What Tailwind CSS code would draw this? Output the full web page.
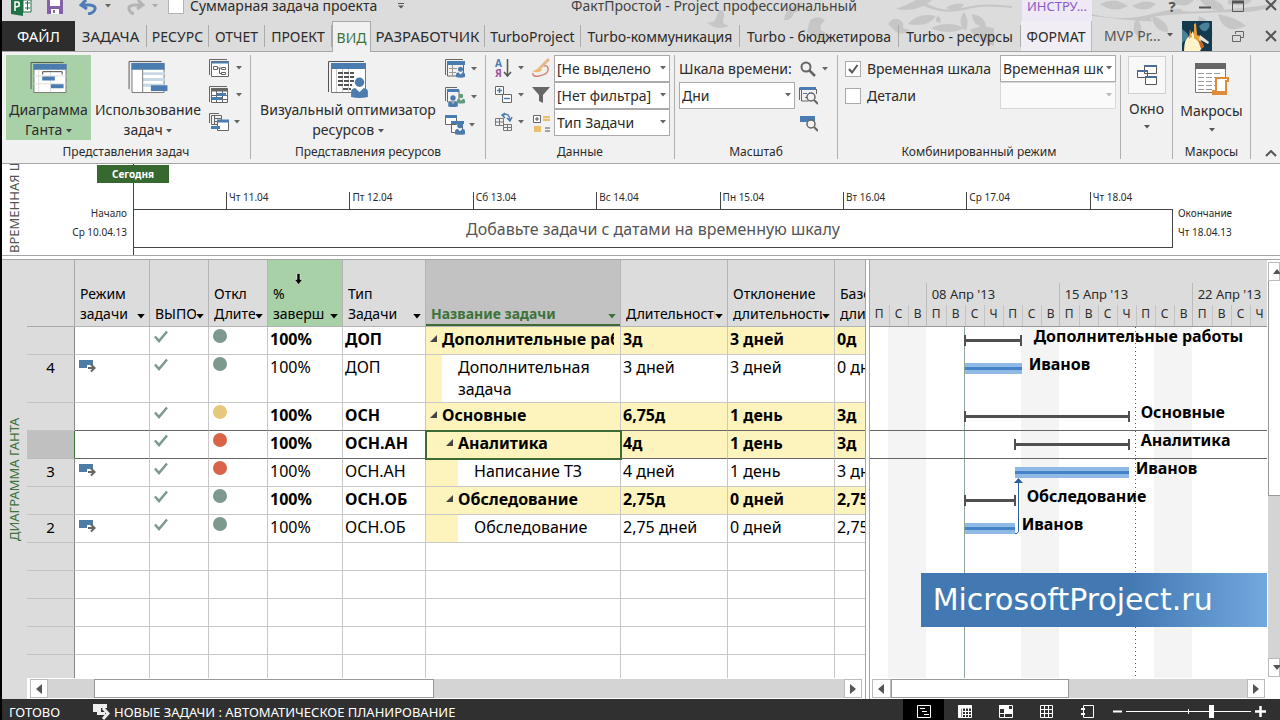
<!DOCTYPE html>
<html lang="ru">
<head>
    <meta charset="UTF-8">
    <meta name="viewport" content="width=device-width, initial-scale=1.0">
    <title>ФактПростой - Project профессиональный</title>
    <script src="https://cdn.jsdelivr.net/npm/@tailwindcss/browser@4"></script>
</head>
<body class="bg-black font-['Noto_Sans','Open_Sans',sans-serif] text-[14px] text-[#2b2b2b]">
<!-- Shared icons -->
<svg class="hidden">
    <symbol id="caret" viewBox="0 0 6 4"><path d="M0 0h6L3 3.5z" fill="currentColor"/></symbol>
    <symbol id="person" viewBox="0 0 16 20"><circle cx="8" cy="5" r="4.5" fill="currentColor"/><path d="M0 19v-5q0-3 4-3.500l4 4 4-4q4 .5 4 3.500v5q-8 2-16 0z" fill="currentColor"/></symbol>
    <symbol id="automode" viewBox="0 0 17 13"><path d="M0 0h14v5H8v3H0z" fill="#4f7ba8"/><path d="M9 8h5M12 4.500 15.500 8 12 11.500" stroke="#666" stroke-width="2" fill="none"/></symbol>
    <symbol id="tick" viewBox="0 0 14 13"><path d="M1 6.500 5 11l8-9.500" stroke="#7d998e" stroke-width="2.500" fill="none"/></symbol>
</svg>

<div class="ml-[2px] flex h-screen flex-col overflow-hidden bg-white">

    <!-- Title bar and tabs -->
    <header class="relative shrink-0 bg-[#dcdcdc]">
        <svg class="absolute right-0 top-0 h-[51px] w-[580px]" viewBox="0 0 580 51" fill="#c6c6c6">
            <path d="M6 22q8 2 10-4l3-8q6 0 5 6l-1 7 6 3q-10 4-17 0zM84 20q2-14 18-18-1 9-8 11-2 8-10 7zM107 32l3-12q10-6 15 1-6 3-4 9l8 5-4 9q-4-6-8-6zM188 24q6-8 12-4 4 2 3 8l7 2q-6 6-14 2z"/>
            <path d="M196 9q13-5 20-9h16q-14 13-36 9zM208 24q10-12 28-8-8 12-28 8zM238 16q4 2 2 7-8-2-2-7zM264 12q6 8 2 19-10-8-2-19zM246 8q8-6 18-4-6 10-18 4zM272 14q14 2 14 14-14-2-14-14zM231 28q16-8 34 0-18 8-34 0zM270 30q10-6 24-2v18q-16-4-24-16z"/>
            <path d="M220 0q22 14 42 8t50-2v2q-30-4-48 2-24 6-48-8z"/>
            <path d="M392 14q30 8 60 0t30-4 60-2 38-10v4q-16 10-38 10t-60 2-30 6-60-4zM400 4q14-8 28 2-14 8-28-2zM432 6q14-8 24-2-10 10-24 2zM436 18q8 8 4 20-10-6-4-20zM452 16q16 4 16 16-14 0-16-16zM470 2q12-6 24-2-8 10-24 2zM500 0h14q10 4 10 10-16 2-24-10zM528 0h24q-6 8-24 4zM484 42q2-12 16-14-2 14-16 14zM499 16q12 4 14 18l-8 10q-10-12-6-28zM518 14q20 4 28 12-22 10-28-12z"/>
        </svg>
        <div class="relative -mt-1 flex h-[25px] text-[14px] leading-[20px]">
            <div class="flex w-[404px] shrink-0 items-center pb-[5px]">
                <svg class="ml-[9px] h-[20px] w-[21px]" viewBox="0 0 21 20"><path d="M0 2 12 0v20L0 18z" fill="#217346"/><path d="M12 4h8v12h-8z" fill="#fff" stroke="#217346"/><path d="M14 7h5M14 12h5M16.500 5v9" stroke="#217346"/><path d="M4 15V6h3q2 1 1 4-2 1-4 1" stroke="#fff" stroke-width="1.500" fill="none"/></svg>
                <svg class="ml-[15px] h-[18px] w-[16px]" viewBox="0 0 16 18"><path d="M0 1h16v16H0z" fill="#8460a8"/><path d="M3 1h10v8H3zM4 12h8v5H4z" fill="#fff"/><path d="M6 13h2v3H6z" fill="#8460a8"/></svg>
                <svg class="ml-[16px] h-[17px] w-[19px]" viewBox="0 0 19 17" fill="none" stroke="#4e7db5" stroke-width="3"><path d="M7 2 2 7l6 4M3 7h8q6 1 5 4-1 4-7 5"/></svg>
                <svg class="ml-[7px] h-[4px] w-[6px] text-[#666]"><use href="#caret"/></svg>
                <svg class="ml-[15px] h-[17px] w-[19px]" viewBox="0 0 19 17" fill="none" stroke="#b4b4b4" stroke-width="3"><path d="m12 2 5 5-6 4M16 7H8q-6 1-5 4 1 4 5 5"/></svg>
                <svg class="ml-[7px] h-[4px] w-[6px] text-[#aaa]"><use href="#caret"/></svg>
                <input id="summary" type="checkbox" class="ml-[10px] h-4 w-4 appearance-none border border-[#b5b5b5] bg-white">
                <label for="summary" class="ml-[6px] whitespace-nowrap">Суммарная задача проекта</label>
                <svg class="ml-auto mr-[2px] h-[6px] w-[6px]" viewBox="0 0 6 6"><path d="M0 .5h6" stroke="#555"/><path d="M0 2.500h6l-3 3z" fill="#555"/></svg>
            </div>
            <h1 class="min-w-0 flex-1 truncate text-center text-[#444]">ФактПростой - Project профессиональный</h1>
            <div class="w-[70px] shrink-0 bg-[#eee9f5] text-center text-[13px] text-[#8a5cc9]">ИНСТРУ...</div>
            <div class="flex w-[188px] shrink-0 items-start justify-end gap-[21px] pr-[3px] text-[#555]">
                <button class="w-3 text-[15px] font-bold" aria-label="Справка">?</button>
                <button aria-label="Свернуть"><svg class="mt-[10px] h-[3px] w-3"><path d="M0 1.500h12" stroke="#555" stroke-width="2"/></svg></button>
                <button aria-label="Развернуть"><svg class="mt-1 h-3 w-3" fill="none" stroke="#555"><path d="M.5 1.500h11v10H.5z"/><path d="M0 2h12" stroke-width="3"/></svg></button>
                <button aria-label="Закрыть"><svg class="mt-[3px] h-3 w-3" stroke="#555" stroke-width="2"><path d="m1 1 10 10M11 1 1 11"/></svg></button>
            </div>
        </div>
        <nav class="relative flex h-[31px] items-stretch whitespace-nowrap border-b border-[#a5a5a5] text-[15px]">
            <button class="w-[73px] shrink-0 bg-[#2d2d2d] text-white">ФАЙЛ</button>
            <button class="my-1 w-[72px] shrink-0 border-r border-[#aaa]">ЗАДАЧА</button>
            <button class="my-1 w-[62px] shrink-0 border-r border-[#aaa] text-[14px]">РЕСУРС</button>
            <button class="my-1 w-[56px] shrink-0 border-r border-[#aaa] text-[14px]">ОТЧЕТ</button>
            <button class="my-1 w-[67px] shrink-0 border-r border-[#aaa] text-[14px]">ПРОЕКТ</button>
            <button class="-mb-px w-[39px] shrink-0 border-x border-t border-[#aaa] bg-[#f1f1f1] text-[14px] text-[#3c7339]">ВИД</button>
            <button class="my-1 w-[114px] shrink-0 border-r border-[#aaa]">РАЗРАБОТЧИК</button>
            <button class="my-1 w-[96px] shrink-0 border-r border-[#aaa] text-[14px]">TurboProject</button>
            <button class="my-1 w-[159px] shrink-0 border-r border-[#aaa] text-[14px]">Turbo-коммуникация</button>
            <button class="my-1 w-[159px] shrink-0 border-r border-[#aaa] text-[14px]">Turbo - бюджетирова</button>
            <button class="my-1 w-[122px] shrink-0 border-r border-[#aaa] text-[14px]">Turbo - ресурсы</button>
            <button class="ml-auto w-[71px] shrink-0 border-r border-[#bbb] bg-[#f0edf4] text-[14px]">ФОРМАТ</button>
            <div class="flex w-[188px] shrink-0 items-center text-[14px] text-[#555]">
                <button class="ml-[12px] flex items-center gap-[7px] pb-[2px]">MVP Pr...<svg class="h-[4px] w-[6px]"><use href="#caret"/></svg></button>
                <svg class="ml-auto h-[30px] w-[30px]" viewBox="0 0 30 30"><path d="M0 0h30v30H0z" fill="#143a50"/><path d="M17 5q5-5 10-3 2 4-3 8-5 1-7-5zM0 8q5 3 7 8l-7 6z" fill="#4a8098"/><path d="M2 30q0-13 6-15l3-5 2 8 4-2q3 6 4 9l-3 5z" fill="#fff3c8"/><path d="m12 3 2-1 1 12 3 1-1 6-5-4zM8 8l2 8-3 2z" fill="#e9a23a"/><path d="m18 14 9 7-1 2-9-5z" fill="#e8e4da"/><path d="M16 19q6 2 6 7l-3 2z" fill="#c8651f"/></svg>
                <button class="ml-[20px]" aria-label="Восстановить окно"><svg class="h-[11px] w-3" fill="none" stroke="#666"><path d="M3.500 3V.5h8v6H9M.5 4.500h8v6h-8z"/></svg></button>
                <button class="ml-[21px] mr-[3px]" aria-label="Закрыть окно"><svg class="h-3 w-3" stroke="#555" stroke-width="2"><path d="m1 1 10 10M11 1 1 11"/></svg></button>
            </div>
        </nav>
    </header>

    <!-- Ribbon -->
    <section class="flex h-[112px] shrink-0 border-b border-[#a5a5a5] bg-[#f1f1f1] pt-[3px] pb-1 text-[14px] leading-[20px]">
        <div class="flex w-[249px] shrink-0 flex-col border-r border-[#b0b0b0]">
            <div class="flex h-[85px]">
                <button class="ml-1 flex w-[85px] flex-col items-center bg-[#a9d1a7] pt-[6px]">
                    <svg class="h-[34px] w-[38px]" viewBox="0 0 38 34"><path d="M.5 29V1.500H34" stroke="#555" fill="none"/><path d="M3.500 3.500h33v29h-33z" fill="#fff" stroke="#777"/><path d="M3 3h34v6H3z" fill="#4b7cb0"/><path d="M8.500 9v23M3 15.500h34M3 23.500h34M20.500 9v23" stroke="#ddd"/><path d="M12.500 14v-3h20v3" stroke="#444" fill="none"/><path d="M12 16h13v4H12zM21 24h13v4H21z" fill="#4b7cb0"/></svg>
                    <span class="mt-[6px] text-center">Диаграмма<br>Ганта <svg class="inline h-[4px] w-[6px] align-middle text-[#444]"><use href="#caret"/></svg></span>
                </button>
                <button class="flex w-[114px] flex-col items-center pt-[5px]">
                    <svg class="h-[35px] w-[40px]" viewBox="0 0 40 35"><path d="M.5 30V1.500H34" stroke="#555" fill="none"/><path d="M3.500 3.500h33v30h-33z" fill="#fff" stroke="#777"/><path d="M3 3h34v7H3z" fill="#4b7cb0"/><path d="M15 14h22M15 20h22M15 26h22" stroke="#c8d8e6" stroke-width="3"/><path d="M14.500 9v24" stroke="#777"/><path d="M23 26h17v6H23z" fill="#4b7cb0"/></svg>
                    <span class="mt-[6px] text-center">Использование<br>задач <svg class="inline h-[4px] w-[6px] align-middle text-[#555]"><use href="#caret"/></svg></span>
                </button>
                <div class="ml-[4px] flex flex-col gap-[9px] pt-[4px] text-[#666]">
                    <button class="flex items-center gap-[6px]"><svg class="h-[18px] w-[21px]" viewBox="0 0 21 18" fill="none" stroke="#666"><path d="M.5 16V.5H18"/><path d="M2.500 2.500h17v15h-17z" fill="#fff"/><path d="M2 3.500h18" stroke="#4b7cb0" stroke-width="2"/><path d="M4.500 7.500h4v3h-4zM12.500 8.500h4v2h-4zM12.500 13.500h4v2h-4zM8 9h4M10.500 9v5.500h2"/></svg><svg class="h-[4px] w-[6px]"><use href="#caret"/></svg></button>
                    <button class="flex items-center gap-[6px]"><svg class="h-[18px] w-[21px]" viewBox="0 0 21 18" fill="none" stroke="#666"><path d="M.5 16V.5H18"/><path d="M2.500 2.500h16v14h-16z" fill="#fff"/><path d="M2 4h17" stroke-width="3"/><path d="M7.500 5v12M13.500 5v12M2 9.500h17M2 13.500h17"/><path d="M8 8.500h9M3 12.500h10" stroke="#4b7cb0" stroke-width="3"/></svg><svg class="h-[4px] w-[6px]"><use href="#caret"/></svg></button>
                    <button class="flex items-center gap-[4px]"><svg class="h-[18px] w-[21px]" viewBox="0 0 21 18" fill="none" stroke="#666"><path d="M.5 10V.5H10M2.500 2.500h10v9h-10z"/><path d="M5.500 3v8M6 5.500h6M6 8.500h6"/><path d="M8.500 8.500h11v9h-11z" fill="#fff"/><path d="M8 8h12M2 14.500h9" stroke="#4b7cb0" stroke-width="3"/></svg><svg class="h-[4px] w-[6px]"><use href="#caret"/></svg></button>
                </div>
            </div>
            <p class="mt-auto text-center text-[12px] leading-[14px]">Представления задач</p>
        </div>

        <div class="flex w-[235px] shrink-0 flex-col border-r border-[#b0b0b0]">
            <div class="flex h-[85px]">
                <button class="ml-1 flex w-[186px] flex-col items-center pt-[5px]">
                    <svg class="h-[38px] w-[40px]" viewBox="0 0 40 38"><path d="M.5 32V1.500H36" stroke="#555" fill="none"/><path d="M3.500 3.500h34v29h-34z" fill="#fff" stroke="#777"/><path d="M3 3h35v6H3z" fill="#4b7cb0"/><path d="M8.500 9v23M14.500 9v23M20.500 9v23" stroke="#ccc"/><path d="M10 13h16M10 17h16M10 21h16M10 25h14M15 29h8" stroke="#555" stroke-width="2" stroke-dasharray="5 1"/><g color="#4b7cb0"><use href="#person" x="23" y="17" width="17" height="21"/></g></svg>
                    <span class="mt-[2px] whitespace-nowrap text-center">Визуальный оптимизатор<br>ресурсов <svg class="inline h-[4px] w-[6px] align-middle text-[#555]"><use href="#caret"/></svg></span>
                </button>
                <div class="ml-[4px] flex flex-col gap-[8px] pt-[4px] text-[#666]">
                    <button class="flex items-center gap-[6px]"><svg class="h-5 w-5" viewBox="0 0 20 20"><path d="M.5 16V.5H18M2.500 3v14h16V3" fill="none" stroke="#666"/><path d="M2 2h18v4H2z" fill="#4b7cb0"/><path d="M7.500 6v11M4 9.500h8M4 13.500h7" stroke="#999"/><g color="#4b7cb0"><use href="#person" x="11" y="7" width="9" height="12"/></g></svg><svg class="h-[4px] w-[6px]"><use href="#caret"/></svg></button>
                    <button class="flex items-center gap-[6px]"><svg class="h-5 w-5" viewBox="0 0 20 20"><path d="M.5 14V.5H12M2.500 3v12H14V3" fill="none" stroke="#666"/><path d="M2 2h12v3H2z" fill="#4b7cb0"/><g color="#4b7cb0"><use href="#person" x="3" y="8" width="10" height="12"/></g><g color="#5f9c7b"><use href="#person" x="12" y="6" width="8" height="11"/></g></svg><svg class="h-[4px] w-[6px]"><use href="#caret"/></svg></button>
                    <button class="flex items-center gap-[4px]"><svg class="h-5 w-5" viewBox="0 0 20 20"><path d="M.5.5h11v9H.5zM6.500 8.500h11v9h-11z" fill="#fff" stroke="#666"/><path d="M0 0h12v3H0zM6 6h13v3H6z" fill="#4b7cb0"/><g color="#4b7cb0"><use href="#person" x="10" y="7" width="10" height="13"/></g></svg><svg class="h-[4px] w-[6px]"><use href="#caret"/></svg></button>
                </div>
            </div>
            <p class="mt-auto text-center text-[12px] leading-[14px]">Представления ресурсов</p>
        </div>

        <div class="flex w-[189px] shrink-0 flex-col border-r border-[#b0b0b0]">
            <div class="flex h-[85px]">
                <div class="ml-[8px] flex w-[30px] flex-col gap-[7px] pt-[3px] text-[#666]">
                    <button class="flex items-center gap-[5px]"><svg class="h-5 w-[19px]" viewBox="0 0 19 20"><text x="1" y="9" font-size="10" font-weight="bold" fill="#4b7cb0">А</text><text x="1" y="19" font-size="10" font-weight="bold" fill="#9a4fa0">Я</text><path d="M13.500 1v16M10 14l3.500 4 3.500-4" stroke="#555" fill="none" stroke-width="1.500"/></svg><svg class="h-[4px] w-[6px]"><use href="#caret"/></svg></button>
                    <button class="flex items-center gap-[5px]"><svg class="h-5 w-[19px]" viewBox="0 0 19 20" fill="none"><path d="M1.500 1.500h8v8h-8zM8.500 9.500h9v8h-9z" fill="#fff" stroke="#666"/><path d="M3 5.500h5M5.500 3v5M10 13.500h6" stroke="#4b7cb0" stroke-width="1.500"/></svg><svg class="h-[4px] w-[6px]"><use href="#caret"/></svg></button>
                    <button class="flex items-center gap-[5px]"><svg class="h-5 w-[19px]" viewBox="0 0 19 20" fill="none" stroke="#777"><path d="M1.500 6.500h8v7h-8zM1 10h8M5.500 7v6M9.500 12.500h8v6h-8zM9 15.500h8M13.500 12v6"/><path d="M9 3q6-3 7 5M13 6l3 3 2-4M11 1 8 3l3 3" stroke="#4b7cb0" stroke-width="1.500"/></svg><svg class="h-[4px] w-[6px]"><use href="#caret"/></svg></button>
                </div>
                <div class="ml-[6px] flex w-[22px] flex-col items-center gap-[7px] pt-[3px]">
                    <svg class="h-5 w-5" viewBox="0 0 20 20" fill="none"><path d="M2 15q-1 4 6 3 10-2 9-7 0-4-4-3" stroke="#d98076" stroke-width="1.500"/><path d="M1 13q5-1 7-4l3 3q-3 4-10 1z" fill="#edb96c"/><path d="M9 10 18 1" stroke="#e5b987" stroke-width="3"/></svg>
                    <svg class="h-5 w-5" viewBox="0 0 20 20"><path d="M1 2h18l-7 8v8l-4-2v-6z" fill="#666"/></svg>
                    <svg class="h-5 w-5" viewBox="0 0 20 20"><path d="M2.500 3.500h7v7h-7z" fill="#fff" stroke="#666"/><path d="M4 7h4M6 5v4M14 16h5M14 19h5" stroke="#555"/><path d="M12 4h7v5h-7zM3 14h7v6H3z" fill="#eabf6d"/><path d="M12 6.500h7" stroke="#f6e5bf"/></svg>
                </div>
                <div class="ml-[2px] w-[116px]">
                    <div class="relative"><select aria-label="Выделение" class="block h-[27px] w-full appearance-none overflow-hidden border border-[#ababab] bg-white pl-[2px] pr-3"><option>[Не выделено</option></select><svg class="pointer-events-none absolute right-1 top-[11px] h-[4px] w-[6px] text-[#666]"><use href="#caret"/></svg></div>
                    <div class="relative"><select aria-label="Фильтр" class="block h-[27px] w-full appearance-none overflow-hidden border border-[#ababab] bg-white pl-[2px] pr-3"><option>[Нет фильтра]</option></select><svg class="pointer-events-none absolute right-1 top-[11px] h-[4px] w-[6px] text-[#666]"><use href="#caret"/></svg></div>
                    <div class="relative"><select aria-label="Группировка" class="block h-[27px] w-full appearance-none overflow-hidden border border-[#ababab] bg-white pl-[2px] pr-3"><option>Тип Задачи</option></select><svg class="pointer-events-none absolute right-1 top-[11px] h-[4px] w-[6px] text-[#666]"><use href="#caret"/></svg></div>
                </div>
            </div>
            <p class="mt-auto text-center text-[12px] leading-[14px]">Данные</p>
        </div>

        <div class="flex w-[163px] shrink-0 flex-col border-r border-[#b0b0b0]">
            <div class="flex h-[27px] items-center pl-1">
                <label for="scale" class="w-[121px] whitespace-nowrap">Шкала времени:</label>
                <button class="flex items-center gap-[6px] text-[#666]" aria-label="Масштаб"><svg class="h-4 w-4" viewBox="0 0 16 16" fill="none" stroke="#666" stroke-width="2"><circle cx="6" cy="6" r="4.500"/><path d="m9 9 6 6" stroke-width="2.500"/></svg><svg class="h-[4px] w-[6px]"><use href="#caret"/></svg></button>
            </div>
            <div class="flex h-[27px] items-center pl-1">
                <div class="relative w-[116px]"><select id="scale" class="block h-[27px] w-full appearance-none border border-[#ababab] bg-white pl-[2px]"><option>Дни</option></select><svg class="pointer-events-none absolute right-1 top-[11px] h-[4px] w-[6px] text-[#666]"><use href="#caret"/></svg></div>
                <button class="ml-1" aria-label="Весь проект"><svg class="h-5 w-[19px]" viewBox="0 0 19 20" fill="none" stroke="#666"><path d="M.5 14V1.500M2.500 3v12h7M17.500 3v5"/><path d="M1 2.500h16" stroke="#4b7cb0" stroke-width="3"/><path d="M4 7.500h4M6 11.500h3" stroke="#4b7cb0"/><circle cx="12" cy="11" r="4" stroke-width="1.500" fill="#f1f1f1"/><path d="m15 14 4 4" stroke-width="2"/></svg></button>
            </div>
            <div class="flex h-[27px] items-center pl-1">
                <button class="ml-[120px]" aria-label="Выбранные задачи"><svg class="h-5 w-[19px]" viewBox="0 0 19 20" fill="none"><path d="M1 3h15v6H1z" fill="#4b7cb0"/><circle cx="12" cy="11" r="4" stroke="#666" stroke-width="1.500" fill="#f1f1f1"/><path d="m15 14 4 4" stroke="#666" stroke-width="2"/></svg></button>
            </div>
            <p class="mt-auto text-center text-[12px] leading-[14px]">Масштаб</p>
        </div>

        <div class="flex w-[283px] shrink-0 flex-col border-r border-[#b0b0b0]">
            <div class="flex h-[27px] items-center pl-[7px]">
                <input id="tl" type="checkbox" checked class="h-4 w-4 appearance-none border border-[#ababab] bg-white">
                <svg class="pointer-events-none -ml-4 h-4 w-4" viewBox="0 0 16 16"><path d="m4 8 3 3.500L12.500 4" stroke="#555" stroke-width="2" fill="none"/></svg>
                <label for="tl" class="ml-[6px] w-[133px] whitespace-nowrap">Временная шкала</label>
                <div class="relative w-[116px]"><select aria-label="Представление шкалы" class="block h-[27px] w-full appearance-none overflow-hidden border border-[#ababab] bg-white pl-[2px] pr-3"><option>Временная шкала</option></select><svg class="pointer-events-none absolute right-1 top-[11px] h-[4px] w-[6px] text-[#666]"><use href="#caret"/></svg></div>
            </div>
            <div class="flex h-[27px] items-center pl-[7px]">
                <input id="details" type="checkbox" class="h-4 w-4 appearance-none border border-[#ababab] bg-white">
                <label for="details" class="ml-[6px] w-[133px]">Детали</label>
                <div class="relative w-[116px]"><select aria-label="Представление деталей" disabled class="block h-[27px] w-full appearance-none border border-[#d8d8d8] bg-[#fafafa]"></select><svg class="pointer-events-none absolute right-1 top-[11px] h-[4px] w-[6px] text-[#bbb]"><use href="#caret"/></svg></div>
            </div>
            <p class="mt-auto text-center text-[12px] leading-[14px]">Комбинированный режим</p>
        </div>

        <div class="flex w-[52px] shrink-0 justify-center border-r border-[#b0b0b0]">
            <button class="flex flex-col items-center self-start pt-px">
                <span class="flex h-[38px] w-[38px] items-center justify-center border border-[#d0d0d0] bg-[#f8f8f8]"><svg class="h-5 w-5" viewBox="0 0 20 20" fill="#fff" stroke="#555"><path d="M7.500.5h12v8h-12zM.5 5.500h10v7H.5z"/><path d="M8.500 11.500h11v8h-11z"/><path d="M7 1h13M0 6h11M8 12h12" stroke="#4b6f96" stroke-width="2"/></svg></span>
                <span class="mt-[5px]">Окно</span>
                <svg class="mt-[6px] h-[4px] w-[6px] text-[#555]"><use href="#caret"/></svg>
            </button>
        </div>

        <div class="flex w-[78px] shrink-0 flex-col items-center border-r border-[#b0b0b0]">
            <button class="flex flex-col items-center pt-[7px]">
                <svg class="h-[35px] w-9" viewBox="0 0 36 35"><path d="M1.500 1.500h30v29h-30z" fill="#fff" stroke="#777"/><path d="M1 1h31v6H1z" fill="#666"/><path d="M4 11.500h24M4 15.500h24M4 19.500h20M4 23.500h18M4 27.500h16" stroke="#999" stroke-dasharray="6 2"/><path d="M22 16h12v3h-2v13H19v-3h3z" fill="#fff" stroke="#e08a3c" stroke-width="2"/><path d="M18 29h13v4H18z" fill="#e08a3c"/></svg>
                <span class="mt-[4px]">Макросы</span>
                <svg class="mt-[7px] h-[4px] w-[6px] text-[#555]"><use href="#caret"/></svg>
            </button>
            <p class="mt-auto text-center text-[12px] leading-[14px]">Макросы</p>
        </div>
        <button class="ml-auto mr-[3px] self-end pb-[2px]" aria-label="Свернуть ленту"><svg class="h-[7px] w-3" fill="none" stroke="#555" stroke-width="2"><path d="m1 6 5-5 5 5"/></svg></button>
    </section>

    <!-- Timeline -->
    <section class="flex h-[92px] shrink-0 overflow-hidden border-b border-[#a5a5a5] text-[10px]">
        <div class="flex w-[25px] shrink-0 rotate-180 items-center whitespace-nowrap pt-[2px] text-[13px] leading-[25px] text-[#555] [writing-mode:vertical-rl]">ВРЕМЕННАЯ ШКАЛА</div>
        <div class="w-[106px] shrink-0 pr-[6px] pt-[40px] text-right leading-[19px]">Начало<br>Ср 10.04.13</div>
        <div class="relative flex flex-1 flex-col border-l border-[#444]">
            <div class="absolute -left-[37px] top-[1px] h-[18px] w-[72px] bg-[#37682f] text-center font-bold leading-[18px] text-white">Сегодня</div>
            <div class="mt-[28px] flex h-[17px] leading-none">
                <div class="flex-[94]"></div>
                <div class="flex-[123] border-l border-[#444] pl-[2px]">Чт 11.04</div>
                <div class="flex-[123] border-l border-[#444] pl-[2px]">Пт 12.04</div>
                <div class="flex-[123] border-l border-[#444] pl-[2px]">Сб 13.04</div>
                <div class="flex-[123] border-l border-[#444] pl-[2px]">Вс 14.04</div>
                <div class="flex-[123] border-l border-[#444] pl-[2px]">Пн 15.04</div>
                <div class="flex-[123] border-l border-[#444] pl-[2px]">Вт 16.04</div>
                <div class="flex-[123] border-l border-[#444] pl-[2px]">Ср 17.04</div>
                <div class="flex-[82] border-l border-[#444] pl-[2px]">Чт 18.04</div>
            </div>
            <div class="-ml-px h-[39px] border border-[#444] text-center text-[16px] leading-[38px] text-[#555]">Добавьте задачи с датами на временную шкалу</div>
        </div>
        <div class="w-[107px] shrink-0 pl-[5px] pt-[40px] leading-[19px]">Окончание<br>Чт 18.04.13</div>
    </section>

    <!-- Gantt view -->
    <main class="mt-[3px] flex min-h-0 flex-1 border-t border-[#a5a5a5]">
        <div class="flex w-[25px] shrink-0 rotate-180 items-center justify-center whitespace-nowrap bg-[#dcdcdc] text-[13px] leading-[25px] text-[#3c7339] [writing-mode:vertical-rl]">ДИАГРАММА ГАНТА</div>

        <section class="flex min-w-0 flex-[839] flex-col border-r border-[#a5a5a5]">
            <div class="min-h-0 flex-1 overflow-hidden">
                <table class="w-[880px] table-fixed border-separate border-spacing-0 text-[16px] leading-[22px] text-black">
                    <colgroup>
                        <col class="w-[48px]"><col class="w-[75px]"><col class="w-[59px]"><col class="w-[59px]"><col class="w-[75px]"><col class="w-[83px]"><col class="w-[195px]"><col class="w-[107px]"><col class="w-[107px]"><col>
                    </colgroup>
                    <thead id="head"></thead>
                    <tbody id="rows"></tbody>
                </table>
            </div>
            <div class="flex h-[21px] shrink-0 bg-white px-[3px] py-px">
                <button class="flex w-[18px] items-center justify-center border border-[#bbb]" aria-label="Влево"><svg class="h-[10px] w-[6px]"><path d="M6 0v10L0 5z" fill="#555"/></svg></button>
                <div class="flex flex-1 bg-[#d4d4d4] pl-[46px]"><div class="w-[340px] border border-[#999] bg-white"></div></div>
                <button class="flex w-[18px] items-center justify-center border border-[#bbb]" aria-label="Вправо"><svg class="h-[10px] w-[6px]"><path d="M0 0v10l6-5z" fill="#555"/></svg></button>
            </div>
        </section>

        <section class="ml-[3px] flex min-w-0 flex-[398] flex-col border-l border-[#a5a5a5]">
            <div id="weeks" class="flex h-[67px] shrink-0 overflow-hidden border-b border-[#999] bg-[#dcdcdc] pt-[23px] text-[13px]"></div>
            <div class="relative min-h-0 flex-1 overflow-hidden text-[16px] font-bold text-black">
                <div class="absolute left-[18px] top-0 h-full w-[38px] bg-[#f4f4f4]"></div>
                <div class="absolute left-[151px] top-0 h-full w-[38px] bg-[#f4f4f4]"></div>
                <div class="absolute left-[284px] top-0 h-full w-[38px] bg-[#f4f4f4]"></div>
                <div class="absolute left-[94px] top-0 h-full w-px bg-[#8fa598]"></div>
                <div class="absolute left-0 top-[103px] h-[29px] w-full border-y border-[#666]"></div>
                <div id="bars"></div>
                <svg class="absolute left-[144px] top-[150px] h-[60px] w-[10px]"><path d="M1 56.500h2l1.500-2V4" stroke="#2c5f9e" fill="none"/><path d="M0 6h9L4.500 1z" fill="#2c5f9e"/></svg>
                <svg class="absolute left-[265px] top-0 h-full w-px"><path d="M.5 0v1000" stroke="#555" stroke-dasharray="1 3"/></svg>
                <a href="#" class="absolute left-[51px] right-0 top-[246px] h-[54px] bg-linear-to-r from-[#4279b3] from-60% to-[#72a8de] pl-3 font-['DejaVu_Sans',sans-serif] text-[30px] font-normal leading-[54px] text-white">MicrosoftProject.ru</a>
            </div>
            <div class="flex h-[21px] shrink-0 bg-white px-[2px] py-px">
                <button class="flex w-[19px] items-center justify-center border border-[#bbb]" aria-label="Влево"><svg class="h-[10px] w-[6px]"><path d="M6 0v10L0 5z" fill="#555"/></svg></button>
                <div class="flex flex-1 bg-[#d4d4d4]"><div class="w-[178px] border border-[#999] bg-white"></div></div>
                <button class="flex w-[18px] items-center justify-center border border-[#bbb]" aria-label="Вправо"><svg class="h-[10px] w-[6px]"><path d="M0 0v10l6-5z" fill="#555"/></svg></button>
            </div>
        </section>

        <div class="ml-px flex w-[12px] shrink-0 flex-col overflow-hidden pb-[22px] pt-[2px]">
            <button class="flex h-[19px] shrink-0 items-center border border-[#bbb] pl-1" aria-label="Вверх"><svg class="h-[5px] w-[7px] shrink-0"><path d="M0 5 4 0l4 5z" fill="#555"/></svg></button>
            <div class="flex-1 bg-[#d4d4d4]"><div class="h-[57%] border-b border-l border-[#999] bg-white"></div></div>
            <button class="flex h-[19px] shrink-0 items-center border border-[#bbb] pl-1" aria-label="Вниз"><svg class="h-[5px] w-[7px] shrink-0"><path d="M0 0h8L4 5z" fill="#555"/></svg></button>
        </div>
    </main>

    <!-- Status bar -->
    <footer class="flex h-[21px] shrink-0 items-stretch bg-[#303030] text-[13px] leading-[26px] text-white">
        <span class="w-[90px] pl-[7px]">ГОТОВО</span>
        <button class="flex items-start gap-[4px] whitespace-nowrap"><svg class="mt-[5px] h-4 w-[18px]" viewBox="0 0 18 16"><path d="M1 0h14v4H9v4H1z" fill="#eee"/><path d="M5 9.500h8M11 4l5 5.500-5 5.500" stroke="#eee" stroke-width="3" fill="none"/></svg>НОВЫЕ ЗАДАЧИ : АВТОМАТИЧЕСКОЕ ПЛАНИРОВАНИЕ</button>
        <div class="ml-auto flex items-stretch">
            <button class="flex w-[41px] items-center justify-center bg-black pt-[4px]" aria-label="Диаграмма Ганта"><svg class="h-[13px] w-[14px]" fill="none" stroke="#fff"><path d="M.5.5h13v12H.5zM3 3.500h5M5 6.500h5M7 9.500h5"/></svg></button>
            <button class="flex w-[41px] items-center justify-center pt-[4px]" aria-label="Использование задач"><svg class="h-[13px] w-[14px]" fill="none" stroke="#fff"><path d="M.5.5h13v12H.5zM4.500 3v10M7.500 3v10M10.500 3v10M4 6.500h10M4 9.500h10"/><path d="M0 2h14M2 0v13" stroke-width="3"/></svg></button>
            <button class="flex w-[41px] items-center justify-center pt-[4px]" aria-label="Визуальный оптимизатор"><svg class="h-[13px] w-[14px]" fill="none" stroke="#fff"><path d="M.5.5h13v12H.5zM0 8.500h14M5.500 8v5"/><path d="M0 2h10M5 6h9" stroke-width="4"/></svg></button>
            <button class="flex w-[41px] items-center justify-center pt-[4px]" aria-label="Лист ресурсов"><svg class="h-[13px] w-[13px]" fill="none" stroke="#fff"><path d="M.5.5h12v12H.5zM4.500 0v13M8.500 0v13M0 4.500h13M0 8.500h13"/></svg></button>
            <button class="flex w-[41px] items-center justify-center pt-[4px]" aria-label="Отчет"><svg class="h-[13px] w-[13px]" fill="none" stroke="#fff"><path d="M2.500.5h10v12h-10z"/><path d="M0 4h4M0 9h4" stroke-width="2"/></svg></button>
            <div class="ml-[5px] mr-[14px] flex items-center pt-[4px]">
                <button aria-label="Уменьшить"><svg class="h-[3px] w-[9px]"><path d="M0 1.500h9" stroke="#fff" stroke-width="2"/></svg></button>
                <input type="range" aria-label="Масштаб" min="0" max="100" value="69" class="mx-[4px] h-[13px] w-[125px] appearance-none bg-[linear-gradient(#fff,#fff),linear-gradient(#fff,#fff)] bg-[length:100%_1px,1px_5px] bg-center bg-no-repeat [&::-webkit-slider-thumb]:h-[13px] [&::-webkit-slider-thumb]:w-[5px] [&::-webkit-slider-thumb]:appearance-none [&::-webkit-slider-thumb]:bg-white">
                <button aria-label="Увеличить"><svg class="h-[11px] w-[11px]"><path d="M0 5.500h11M5.500 0v11" stroke="#fff" stroke-width="2.500"/></svg></button>
            </div>
        </div>
    </footer>
</div>

<script>
    const dotColors = { g: 'fill-[#7d998e]', y: 'fill-[#e6c77b]', r: 'fill-[#d9644a]' };

    // Column headers
    const columns = [
        ['Режим<br>задачи'], ['ВЫПОЛ'], ['Откл<br>Длител'],
        ['%<br>заверш', 'relative bg-[#a9d1a7] font-normal'], ['Тип<br>Задачи'],
        ['Название задачи', 'bg-[#c2c2c2] font-bold text-[#3c7339] shadow-[inset_0_-2px_#3c6b35]'],
        ['Длительность'], ['Отклонение<br>длительности'], ['Базовая<br>длительность']
    ];
    // Column selection pointer
    const pointer = '<svg class="absolute left-[26px] top-[13px] h-[12px] w-[9px]"><path d="M3 .5h3v6h2.500l-4 5-4-5H3z" fill="#000" stroke="#fff" stroke-width=".5"/></svg>';
    let html = '<tr class="h-[67px] text-left text-[14px] leading-[20px]"><th class="border-b border-r border-[#aaa] bg-[#dcdcdc]"></th>';
    columns.forEach(([title, extra], i) => {
        html += `<th class="border-b border-r border-[#b4b4b4] ${extra || 'bg-[#dcdcdc] font-normal'} p-0 align-bottom">
            ${i === 3 ? pointer : ''}
            <div class="flex items-end pb-[2px] pl-[5px] pr-[4px]">
                <span class="min-w-0 flex-1 overflow-hidden whitespace-nowrap">${title}</span>
                <svg class="mb-[5px] h-[5px] w-[8px] shrink-0"><use href="#caret"/></svg>
            </div></th>`;
    });
    document.getElementById('head').innerHTML = html + '</tr>';

    // Tasks: id, dot, type, level, name, duration, deviation, baseline
    const tasks = [
        { dot: 'g', type: 'ДОП', level: 0, name: 'Дополнительные работы', cells: ['3д', '3 дней', '0д'], sum: true },
        { id: 4, dot: 'g', type: 'ДОП', level: 1, name: 'Дополнительная<br>задача', cells: ['3 дней', '3 дней', '0 дней'] },
        { dot: 'y', type: 'ОСН', level: 0, name: 'Основные', cells: ['6,75д', '1 день', '3д'], sum: true, before: true },
        { dot: 'r', type: 'ОСН.АН', level: 1, name: 'Аналитика', cells: ['4д', '1 день', '3д'], sum: true, selected: true },
        { id: 3, dot: 'r', type: 'ОСН.АН', level: 2, name: 'Написание ТЗ', cells: ['4 дней', '1 день', '3 дней'] },
        { dot: 'g', type: 'ОСН.ОБ', level: 1, name: 'Обследование', cells: ['2,75д', '0 дней', '2,75д'], sum: true },
        { id: 2, dot: 'g', type: 'ОСН.ОБ', level: 2, name: 'Обследование', cells: ['2,75 дней', '0 дней', '2,75 дней'] }
    ];
    const indents = ['pl-0', 'pl-4', 'pl-8'];
    const strips = ['w-0', 'w-4', 'w-8'];
    html = '';
    tasks.forEach(t => {
        const line = t.selected || t.before ? 'border-b border-r border-r-[#c8c8c8] border-b-[#666]' : 'border-b border-r border-[#c8c8c8]';
        const cell = `${line} overflow-hidden whitespace-nowrap pt-px pb-[2px] pr-0 pl-[2px] align-top`;
        const yellow = t.sum ? 'bg-[#fcf3bd]' : '';
        html += `<tr class="h-[28px] ${t.sum ? 'font-bold' : ''}">
            <th scope="row" class="border-b border-r ${t.selected ? 'border-b-[#bbb] border-r-[#3c7339] bg-[#c0c0c0]' : 'border-b-[#c4c4c4] border-r-[#888] bg-[#dcdcdc]'} p-0 pt-px align-top text-[15px] font-normal">${t.id || ''}</th>
            <td class="${cell}">${t.id ? '<svg class="ml-[2px] mt-1 h-[13px] w-[17px]"><use href="#automode"/></svg>' : ''}</td>
            <td class="${cell}"><svg class="ml-[2px] mt-[2px] h-[13px] w-[14px]"><use href="#tick"/></svg></td>
            <td class="${cell}"><svg class="ml-[2px] mt-px h-[14px] w-[14px] ${dotColors[t.dot]}"><circle cx="7" cy="7" r="7"/></svg></td>
            <td class="${cell}">100%</td>
            <td class="${cell}">${t.type}</td>
            <td class="${line} p-0 align-top ${yellow} ${t.selected ? 'outline-2 -outline-offset-1 outline-[#3c6b35]' : ''}">
                ${t.sum
                    ? `<div class="mr-[6px] flex overflow-hidden whitespace-nowrap pt-px ${indents[t.level]}"><svg class="ml-1 mr-[5px] mt-[7px] h-[7px] w-[7px] shrink-0"><path d="M7 0v7H0z" fill="#444"/></svg>${t.name}</div>`
                    : `<div class="flex min-h-[27px]"><div class="${strips[t.level]} bg-[#fcf3bd]"></div><div class="pb-[2px] pl-4 pt-px">${t.name}</div></div>`}
            </td>
            ${t.cells.map(c => `<td class="${cell} ${yellow}">${c}</td>`).join('')}
        </tr>`;
    });
    // Empty rows down to the bottom of the sheet
    for (let i = 0; i < 5; i++) {
        html += '<tr class="h-[28px]"><th class="border-b border-r border-b-[#c4c4c4] border-r-[#888] bg-[#dcdcdc]"></th>'
            + '<td class="border-b border-r border-[#c8c8c8]"></td>'.repeat(9) + '</tr>';
    }
    document.getElementById('rows').innerHTML = html;

    // Chart time scale
    const days = ['П', 'В', 'С', 'Ч', 'П', 'С', 'В'];
    const weeks = [['', days.slice(4)], ["08 Апр '13", days], ["15 Апр '13", days], ["22 Апр '13", days.slice(0, 4)]];
    document.getElementById('weeks').innerHTML = weeks.map(([title, list], i) => `
        <div class="shrink-0 ${i ? 'border-l border-[#bbb] w-[133px]' : 'w-[56px]'}">
            <div class="h-[22px] pl-[5px] leading-[22px]">${title}</div>
            <div class="flex h-[21px] text-[12px] leading-[18px]">${list.map((d, n) => `<span class="w-[19px] shrink-0 text-center ${n ? 'border-l border-[#c4c4c4]' : ''}">${d}</span>`).join('')}</div>
        </div>`).join('');

    // Chart bars: left, width, middle, label, label left, summary
    const bars = [
        [94, 58, 13, 'Дополнительные работы', 164, true],
        [95, 57, 41, 'Иванов', 159, false],
        [94, 166, 89, 'Основные', 271, true],
        [144, 116, 117, 'Аналитика', 271, true],
        [145, 114, 145, 'Иванов', 266, false],
        [94, 52, 173, 'Обследование', 157, true],
        [95, 50, 201, 'Иванов', 152, false]
    ];
    document.getElementById('bars').innerHTML = bars.map(([x, w, y, label, lx, sum]) => `
        <div class="absolute flex h-[11px] items-center ${sum ? 'border-x-2 border-[#505050]' : 'bg-[#8fb9e6]'}" style="left:${x}px;width:${w}px;top:${y - 5}px">
            <div class="h-[3px] w-full ${sum ? 'bg-[#505050]' : 'bg-[#4583c8]'}"></div>
        </div>
        <span class="absolute whitespace-nowrap leading-[22px]" style="left:${lx}px;top:${y - 15}px">${label}</span>`).join('');
</script>
</body>
</html>
